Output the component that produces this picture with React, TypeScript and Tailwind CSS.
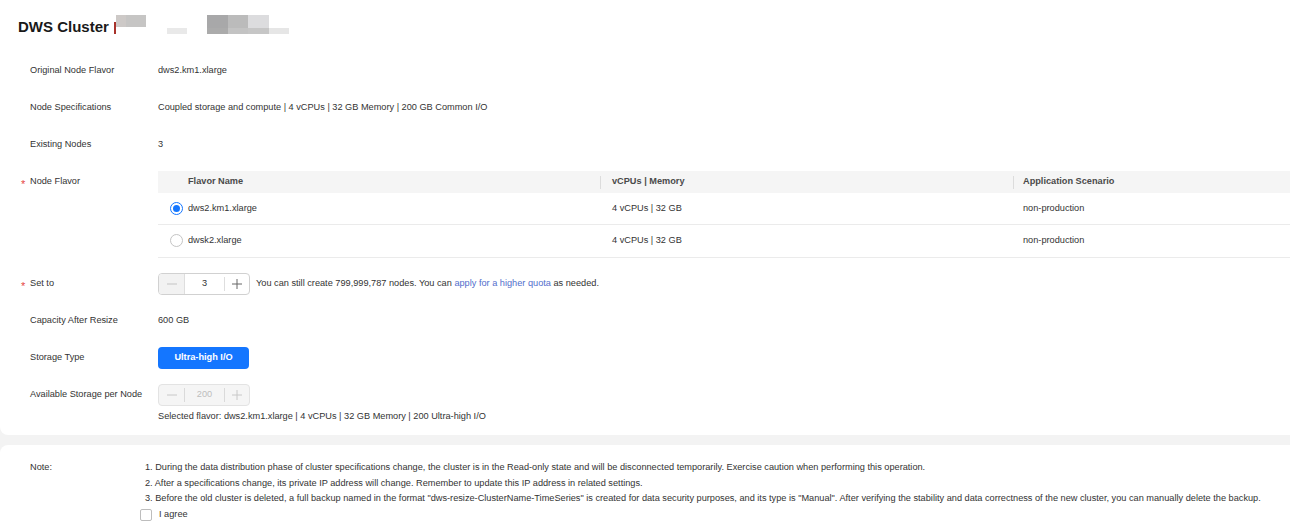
import React from "react";

function Row({
  label,
  required,
  children,
  className = "",
}: {
  label: string;
  required?: boolean;
  children?: React.ReactNode;
  className?: string;
}) {
  return (
    <div className={"flex items-start " + className}>
      <div className="relative w-[158px] shrink-0 pl-[30px] h-[22px] flex items-center text-[#333]">
        {required && (
          <span className="absolute left-[21px] top-[8px] text-[11px] leading-none text-[#e54545]">*</span>
        )}
        {label}
      </div>
      {children}
    </div>
  );
}

function Minus({ color }: { color: string }) {
  return (
    <svg width="10" height="10" viewBox="0 0 10 10">
      <line x1="0" y1="5" x2="10" y2="5" stroke={color} strokeWidth="1" />
    </svg>
  );
}

function Plus({ color }: { color: string }) {
  return (
    <svg width="10" height="10" viewBox="0 0 10 10">
      <line x1="0" y1="5" x2="10" y2="5" stroke={color} strokeWidth="1" />
      <line x1="5" y1="0" x2="5" y2="10" stroke={color} strokeWidth="1" />
    </svg>
  );
}

function Radio({ checked }: { checked?: boolean }) {
  return checked ? (
    <span className="w-[13px] h-[13px] rounded-full border border-[#1476ff] flex items-center justify-center">
      <span className="w-[7px] h-[7px] rounded-full bg-[#1476ff]" />
    </span>
  ) : (
    <span className="w-[13px] h-[13px] rounded-full border border-[#c4c4c4] bg-white" />
  );
}

export default function App() {
  return (
    <div className="w-[1290px] h-[532px] overflow-hidden bg-[#f3f3f3] text-[#333] font-['Liberation_Sans',Arial,sans-serif] text-[9.2px]">
      <div className="bg-white rounded-bl-[8px] h-[435px]">
        <div className="h-[54px] flex items-center pl-[18px]">
          <span className="text-[15px] font-bold text-[#191919] mt-[1px]">DWS Cluster</span>
          <svg width="176" height="22" viewBox="0 0 176 22" className="ml-[5px] -mt-[4px]">
            <rect x="0" y="8" width="2" height="12" fill="#a8322b" />
            <rect x="2" y="1" width="10" height="12" fill="#cdc9c7" />
            <rect x="12" y="1" width="20" height="12" fill="#c6c5c4" />
            <rect x="53" y="14" width="20" height="6" fill="#e9e9e9" />
            <rect x="93" y="1" width="21" height="13" fill="#a8a8a9" />
            <rect x="93" y="14" width="21" height="6" fill="#ababab" />
            <rect x="114" y="1" width="20" height="13" fill="#bbbbbb" />
            <rect x="114" y="14" width="20" height="6" fill="#c3c3c3" />
            <rect x="134" y="1" width="21" height="13" fill="#dcdcde" />
            <rect x="134" y="14" width="21" height="6" fill="#c6c6c6" />
            <rect x="155" y="14" width="20" height="6" fill="#e6e6e6" />
          </svg>
        </div>

        <div className="flex flex-col gap-[15px] pt-[6px]">
          <Row label="Original Node Flavor">
            <div className="h-[22px] flex items-center">dws2.km1.xlarge</div>
          </Row>
          <Row label="Node Specifications">
            <div className="h-[22px] flex items-center">
              Coupled storage and compute | 4 vCPUs | 32 GB Memory | 200 GB Common I/O
            </div>
          </Row>
          <Row label="Existing Nodes">
            <div className="h-[22px] flex items-center">3</div>
          </Row>
          <Row label="Node Flavor" required>
            <div className="flex-1">
              <div className="flex h-[22px] items-center bg-[#f5f5f5] font-bold text-[#4a4a4a]">
                <div className="w-[442px] pl-[30px]">Flavor Name</div>
                <div className="w-[413px] h-[13px] border-l border-[#dcdcdc] pl-[11px] flex items-center">
                  vCPUs | Memory
                </div>
                <div className="flex-1 h-[13px] border-l border-[#dcdcdc] pl-[9px] flex items-center">
                  Application Scenario
                </div>
              </div>
              <div className="flex h-[32px] items-center border-b border-[#ebebeb]">
                <div className="w-[442px] pl-[12px] flex items-center gap-[5px]">
                  <Radio checked />
                  <span>dws2.km1.xlarge</span>
                </div>
                <div className="w-[413px] pl-[12px]">4 vCPUs | 32 GB</div>
                <div className="flex-1 pl-[10px]">non-production</div>
              </div>
              <div className="flex h-[33px] items-center border-b border-[#ebebeb]">
                <div className="w-[442px] pl-[12px] flex items-center gap-[5px]">
                  <Radio />
                  <span>dwsk2.xlarge</span>
                </div>
                <div className="w-[413px] pl-[12px]">4 vCPUs | 32 GB</div>
                <div className="flex-1 pl-[10px]">non-production</div>
              </div>
            </div>
          </Row>
          <Row label="Set to" required>
            <div className="flex items-center">
              <div className="flex h-[22px] w-[92px] border border-[#d1d1d1] rounded-[4px] overflow-hidden bg-white">
                <div className="w-[25px] bg-[#f2f2f2] flex items-center justify-center">
                  <Minus color="#c4c4c4" />
                </div>
                <div className="w-[1px] bg-[#dedede]" />
                <div className="flex-1 flex items-center justify-center text-[#333]">3</div>
                <div className="w-[1px] h-[14px] self-center bg-[#dedede]" />
                <div className="w-[24px] flex items-center justify-center">
                  <Plus color="#666" />
                </div>
              </div>
              <span className="ml-[6px]">
                You can still create 799,999,787 nodes. You can{" "}
                <span className="text-[#526ecc]">apply for a higher quota</span> as needed.
              </span>
            </div>
          </Row>
          <Row label="Capacity After Resize">
            <div className="h-[22px] flex items-center">600 GB</div>
          </Row>
          <Row label="Storage Type">
            <div className="h-[22px] w-[91px] rounded-[4px] bg-[#1476ff] text-white font-bold flex items-center justify-center">
              Ultra-high I/O
            </div>
          </Row>
          <Row label="Available Storage per Node">
            <div className="flex flex-col">
              <div className="flex h-[22px] w-[92px] border border-[#e3e3e3] rounded-[4px] overflow-hidden bg-[#f5f5f5]">
                <div className="w-[25px] flex items-center justify-center">
                  <Minus color="#c8c8c8" />
                </div>
                <div className="w-[1px] h-[14px] self-center bg-[#dadada]" />
                <div className="flex-1 flex items-center justify-center text-[#bdbdbd]">200</div>
                <div className="w-[1px] h-[14px] self-center bg-[#dadada]" />
                <div className="w-[24px] flex items-center justify-center">
                  <Plus color="#c8c8c8" />
                </div>
              </div>
              <div className="mt-[3px] leading-[14px]">
                Selected flavor: dws2.km1.xlarge | 4 vCPUs | 32 GB Memory | 200 Ultra-high I/O
              </div>
            </div>
          </Row>
        </div>
      </div>

      <div className="mt-[10px] bg-white rounded-tl-[8px] h-[87px] flex pt-[15px] leading-[15.6px]">
        <div className="w-[145px] shrink-0 pl-[30px]">Note:</div>
        <div className="flex flex-col">
          <div>
            1. During the data distribution phase of cluster specifications change, the cluster is in the Read-only state and will be disconnected temporarily. Exercise caution when performing this operation.
          </div>
          <div>
            2. After a specifications change, its private IP address will change. Remember to update this IP address in related settings.
          </div>
          <div>
            3. Before the old cluster is deleted, a full backup named in the format "dws-resize-ClusterName-TimeSeries" is created for data security purposes, and its type is "Manual". After verifying the stability and data correctness of the new cluster, you can manually delete the backup.
          </div>
          <div className="flex items-center -ml-[5px] h-[16px]">
            <span className="w-[12px] h-[12px] rounded-[2px] border border-[#bdbdbd] bg-white" />
            <span className="ml-[7px]">I agree</span>
          </div>
        </div>
      </div>
    </div>
  );
}
